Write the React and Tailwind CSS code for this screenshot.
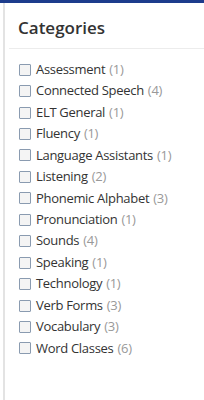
import React from "react";

const items = [
  ["Assessment", 1],
  ["Connected Speech", 4],
  ["ELT General", 1],
  ["Fluency", 1],
  ["Language Assistants", 1],
  ["Listening", 2],
  ["Phonemic Alphabet", 3],
  ["Pronunciation", 1],
  ["Sounds", 4],
  ["Speaking", 1],
  ["Technology", 1],
  ["Verb Forms", 3],
  ["Vocabulary", 3],
  ["Word Classes", 6],
];

export default function App() {
  return (
    <div className="w-[204px] h-[400px] bg-white overflow-hidden" style={{ fontFamily: '"Open Sans", sans-serif' }}>
      <div className="h-[3px] bg-[#1d3c8c]" />
      <div className="flex h-[397px]">
        <div className="w-[3px] shrink-0" />
        <div className="w-[2px] shrink-0 bg-[#e3e3e3]" />
        <div className="flex-1 pl-[4px]">
          <h2 className="pl-[9px] pt-[14px] pb-[9px] text-[17px] leading-[22px] font-semibold text-[#333] border-b border-[#ececec]">
            Categories
          </h2>
          <ul className="pt-[10px] pl-[10px] flex flex-col">
            {items.map(([name, n]) => (
              <li key={name} className="flex items-center h-[21.45px] text-[13px] tracking-[-0.3px] text-[#333]">
                <span className="w-[12px] h-[12px] border border-[#8a9bb0] bg-[#f4f4f4] rounded-[1px] mr-[5px] shrink-0" />
                <span>{name}</span>
                <span className="ml-[4px] text-[#999]">({n})</span>
              </li>
            ))}
          </ul>
        </div>
      </div>
    </div>
  );
}
